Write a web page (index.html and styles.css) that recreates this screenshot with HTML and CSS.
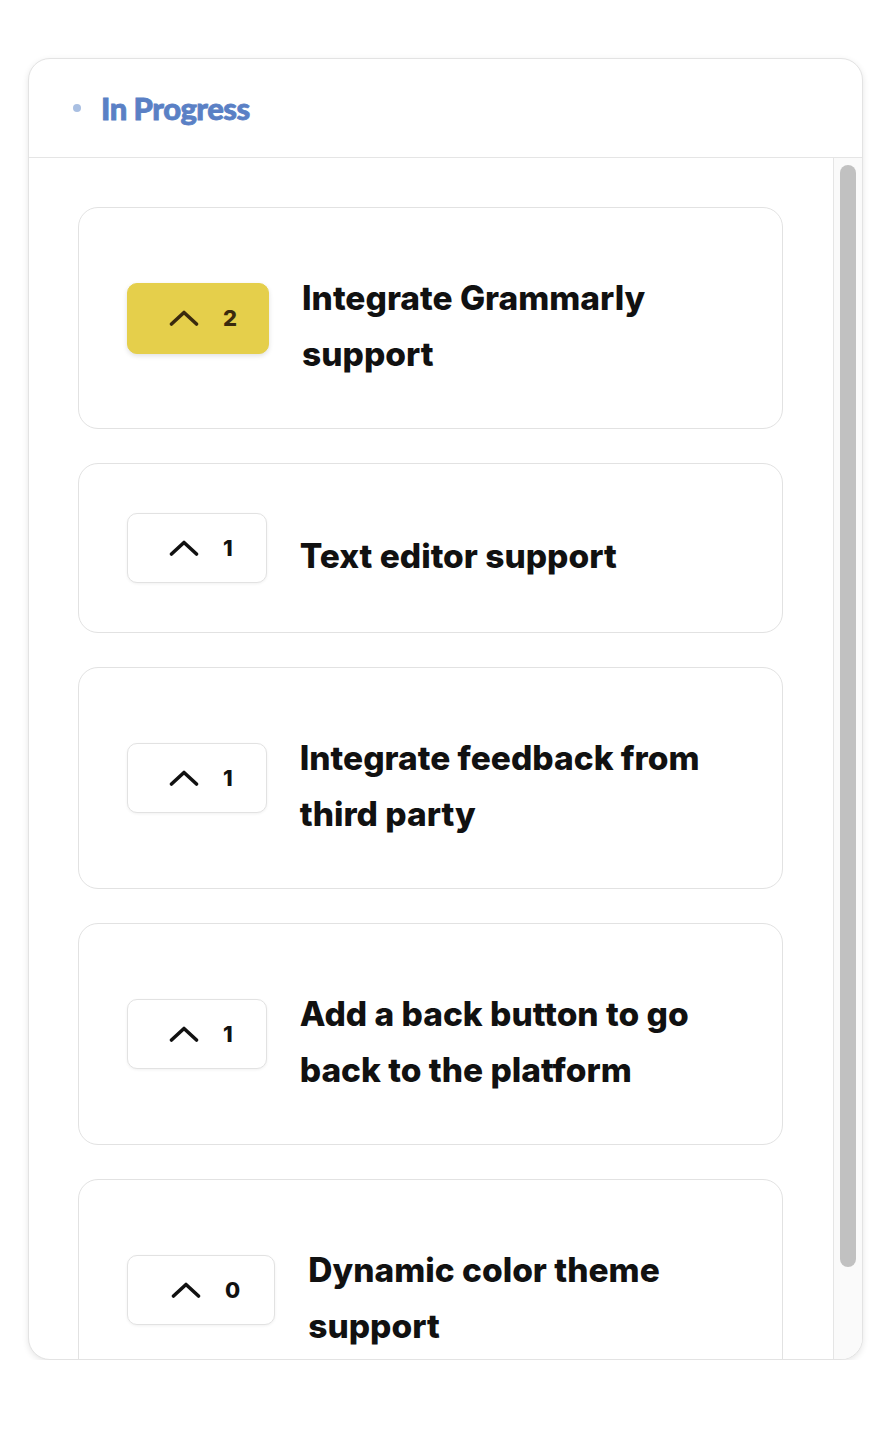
FILE: index.html
```html
<!DOCTYPE html>
<html lang="en">
<head>
<meta charset="utf-8">
<title>Roadmap - In Progress</title>
<link rel="stylesheet" href="styles.css">
</head>
<body>
<section class="column">
  <header class="column-head">
    <span class="dot"></span>
    <h2 class="column-title">In Progress</h2>
  </header>
  <div class="column-body">
    <div class="list">
      <article class="card">
        <button class="vote active"><svg class="chev" viewBox="0 0 30 16" width="30" height="16"><path d="M2.5 14 L15 2.5 L27.5 14" fill="none" stroke="currentColor" stroke-width="3.6" stroke-linecap="round" stroke-linejoin="round"/></svg><span class="count">2</span></button>
        <h3 class="title">Integrate Grammarly support</h3>
      </article>
      <article class="card">
        <button class="vote"><svg class="chev" viewBox="0 0 30 16" width="30" height="16"><path d="M2.5 14 L15 2.5 L27.5 14" fill="none" stroke="currentColor" stroke-width="3.6" stroke-linecap="round" stroke-linejoin="round"/></svg><span class="count">1</span></button>
        <h3 class="title">Text editor support</h3>
      </article>
      <article class="card">
        <button class="vote"><svg class="chev" viewBox="0 0 30 16" width="30" height="16"><path d="M2.5 14 L15 2.5 L27.5 14" fill="none" stroke="currentColor" stroke-width="3.6" stroke-linecap="round" stroke-linejoin="round"/></svg><span class="count">1</span></button>
        <h3 class="title">Integrate feedback from third party</h3>
      </article>
      <article class="card">
        <button class="vote"><svg class="chev" viewBox="0 0 30 16" width="30" height="16"><path d="M2.5 14 L15 2.5 L27.5 14" fill="none" stroke="currentColor" stroke-width="3.6" stroke-linecap="round" stroke-linejoin="round"/></svg><span class="count">1</span></button>
        <h3 class="title">Add a back button to go back to the platform</h3>
      </article>
      <article class="card">
        <button class="vote wide"><svg class="chev" viewBox="0 0 30 16" width="30" height="16"><path d="M2.5 14 L15 2.5 L27.5 14" fill="none" stroke="currentColor" stroke-width="3.6" stroke-linecap="round" stroke-linejoin="round"/></svg><span class="count">0</span></button>
        <h3 class="title">Dynamic color theme support</h3>
      </article>
    </div>
    <div class="rail"><div class="thumb"></div></div>
  </div>
</section>
</body>
</html>
```

FILE: styles.css
```css
* { box-sizing: border-box; }
html, body { margin: 0; padding: 0; background: #ffffff; }
body {
  padding: 58px 33px 0 28px;
  font-family: Inter, "Noto Sans", sans-serif;
  color: #111111;
}
.column {
  width: 835px;
  height: 1302px;
  border: 1px solid #e3e3e3;
  border-radius: 22px;
  box-shadow: 0 2px 6px rgba(0, 0, 0, 0.10);
  background: #ffffff;
  display: flex;
  flex-direction: column;
  overflow: hidden;
}
.column-head {
  height: 99px;
  flex: none;
  border-bottom: 1px solid #e5e5e5;
  display: flex;
  align-items: center;
  padding: 0 0 0 44px;
  gap: 20px;
}
.dot {
  width: 8px;
  height: 8px;
  border-radius: 50%;
  background: #a9bfe2;
}
.column-title {
  margin: 0;
  font-family: Lato, "Noto Sans", sans-serif;
  font-size: 31px;
  font-weight: 900;
  color: #5a80c5;
  letter-spacing: -0.5px;
  -webkit-text-stroke: 0.8px #5a80c5;
}
.column-body {
  flex: 1;
  min-height: 0;
  display: flex;
}
.list {
  flex: 1;
  min-width: 0;
  overflow: hidden;
  padding: 49px 50px 49px 49px;
  display: flex;
  flex-direction: column;
  gap: 34px;
}
.rail {
  flex: none;
  width: 29px;
  background: #fafafa;
  border-left: 1px solid #e5e5e5;
  padding: 7px 6px 0 6px;
}
.thumb {
  width: 16px;
  height: 1102px;
  border-radius: 8px;
  background: #c1c1c1;
}
.card {
  flex: none;
  border: 1px solid #e2e2e2;
  border-radius: 20px;
  padding: 46px 48px;
  display: flex;
  align-items: center;
  gap: 33px;
}
.vote {
  flex: none;
  height: 70px;
  margin: 3px 0;
  padding: 0 33px 0 41px;
  display: flex;
  align-items: center;
  gap: 24px;
  border: 1px solid #e2e2e2;
  border-radius: 10px;
  background: #ffffff;
  color: #111111;
  font-family: Inter, "Noto Sans", sans-serif;
  box-shadow: 0 1px 3px rgba(0, 0, 0, 0.06);
  cursor: pointer;
}
.vote.wide { padding-left: 43px; padding-right: 34px; }
.vote.active {
  height: 71px;
  padding-right: 31px;
  background: #e5cf4b;
  border-color: #e5cf4b;
  color: #3a2a0e;
  box-shadow: 0 2px 5px rgba(0, 0, 0, 0.12);
}
.chev { display: block; }
.count {
  font-size: 22px;
  font-weight: 800;
  line-height: 1;
}
.title {
  margin: 0;
  padding-top: 16px;
  font-size: 33.5px;
  font-weight: 800;
  line-height: 56px;
  letter-spacing: 0;
}
```
